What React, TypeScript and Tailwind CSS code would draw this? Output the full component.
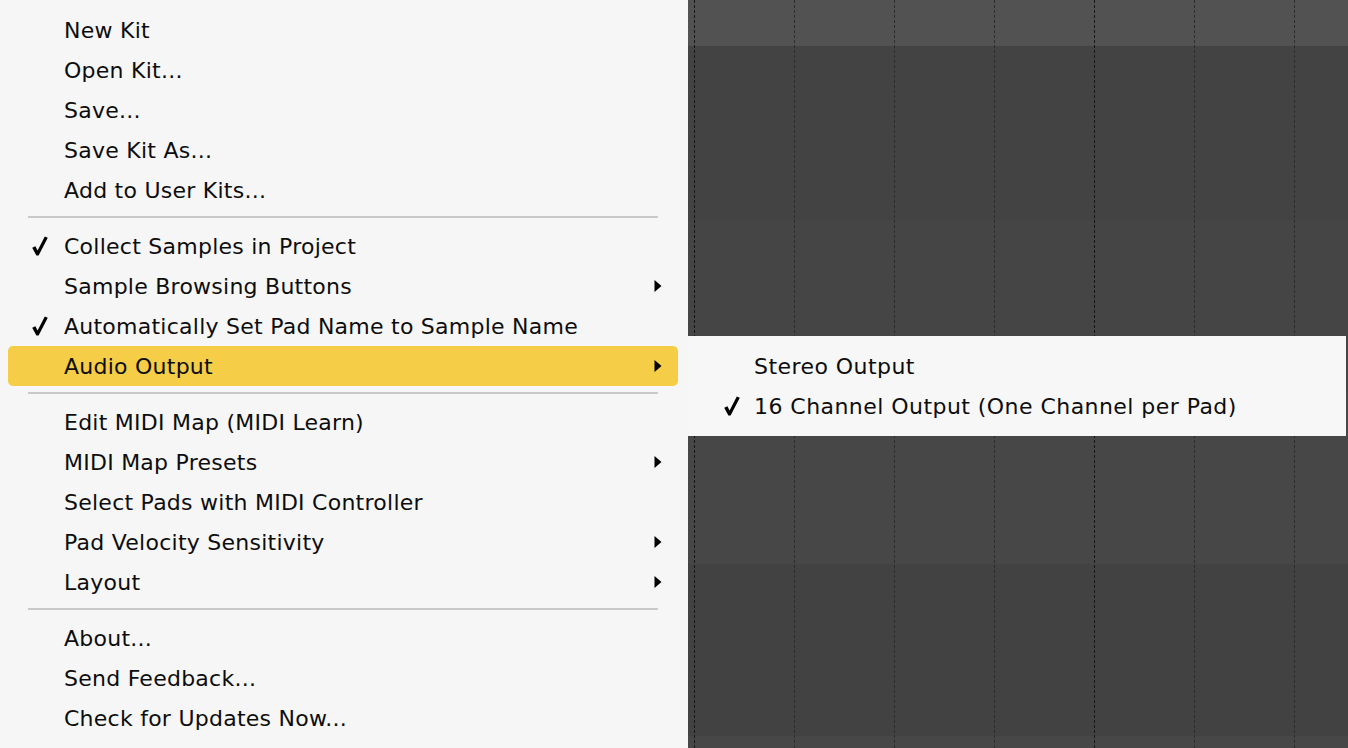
import React from 'react';

type Entry =
  | { kind: 'item'; label: string; checked?: boolean; submenu?: boolean; active?: boolean }
  | { kind: 'sep' };

const menu: Entry[] = [
  { kind: 'item', label: 'New Kit' },
  { kind: 'item', label: 'Open Kit...' },
  { kind: 'item', label: 'Save...' },
  { kind: 'item', label: 'Save Kit As...' },
  { kind: 'item', label: 'Add to User Kits...' },
  { kind: 'sep' },
  { kind: 'item', label: 'Collect Samples in Project', checked: true },
  { kind: 'item', label: 'Sample Browsing Buttons', submenu: true },
  { kind: 'item', label: 'Automatically Set Pad Name to Sample Name', checked: true },
  { kind: 'item', label: 'Audio Output', submenu: true, active: true },
  { kind: 'sep' },
  { kind: 'item', label: 'Edit MIDI Map (MIDI Learn)' },
  { kind: 'item', label: 'MIDI Map Presets', submenu: true },
  { kind: 'item', label: 'Select Pads with MIDI Controller' },
  { kind: 'item', label: 'Pad Velocity Sensitivity', submenu: true },
  { kind: 'item', label: 'Layout', submenu: true },
  { kind: 'sep' },
  { kind: 'item', label: 'About...' },
  { kind: 'item', label: 'Send Feedback...' },
  { kind: 'item', label: 'Check for Updates Now...' },
];

const font = "font-['DejaVu_Sans',_'Liberation_Sans',_sans-serif]";

function Check() {
  return (
    <svg width="16" height="20" viewBox="0 0 16 20" className="shrink-0">
      <path d="M0.2 11.8 L3.4 10.2 L5.6 14.6 L12.8 0.4 L15.8 1.8 L6.6 19.6 L4.4 19.6 Z" fill="#000" />
    </svg>
  );
}

function Arrow() {
  return (
    <svg width="8" height="12" viewBox="0 0 8 12" className="shrink-0">
      <path d="M0.5 0 L7.5 6 L0.5 12 Z" fill="#000" />
    </svg>
  );
}

function MenuRow({ label, checked, submenu, active }: { label: string; checked?: boolean; submenu?: boolean; active?: boolean }) {
  return (
    <div className={`ml-[8px] mr-[10px] h-[40px] flex items-center rounded-[5px] ${active ? 'bg-[#f5cd47]' : ''}`}>
      <div className="w-[56px] flex justify-end pr-[16px]">{checked && <Check />}</div>
      <span className="flex-1 text-[22px] text-[#0d0d0d] tracking-[0.25px]">{label}</span>
      <div className="w-[24px] flex items-center">{submenu && <Arrow />}</div>
    </div>
  );
}

function Separator() {
  return (
    <div className="h-[16px] pt-[6px] pl-[28px] pr-[30px]">
      <div className="h-[2px] bg-[#c9c9c9]" />
    </div>
  );
}

// lanes of the pad grid behind the menu
const bands = ['bg-[#454545]', 'bg-[#474747]', 'bg-[#424242]', 'bg-[#474747]'];
const cols = [0, 1, 2, 3, 4, 5, 6];

export default function App() {
  return (
    <div className={`relative w-[1348px] h-[748px] overflow-hidden flex ${font}`}>
      <div className="w-[688px] h-full bg-[#f6f6f6] pt-[10px]">
        {menu.map((e, i) =>
          e.kind === 'sep' ? (
            <Separator key={i} />
          ) : (
            <MenuRow key={i} label={e.label} checked={e.checked} submenu={e.submenu} active={e.active} />
          )
        )}
      </div>

      <div className="relative flex-1 h-full flex flex-col overflow-hidden">
        <div className="h-[46px] shrink-0 bg-[#525252]" />
        <div className="h-[174px] shrink-0 bg-[#434343]" />
        {bands.map((b, i) => (
          <div key={i} className={`h-[172px] shrink-0 ${b}`} />
        ))}
        <div className="absolute inset-0 flex pl-[6px]">
          {cols.map((c) => (
            <div
              key={c}
              className={`w-[100px] h-full shrink-0 border-l border-dashed ${c % 4 === 0 ? 'border-[#161616]' : 'border-[#2c2c2c]'}`}
            />
          ))}
        </div>
      </div>

      <div className="absolute left-[688px] top-[336px] w-[658px] h-[100px] bg-[#f7f7f7] pt-[10px]">
        <div className="h-[40px] flex items-center">
          <div className="w-[66px]" />
          <span className="text-[22px] text-[#0d0d0d] tracking-[0.45px]">Stereo Output</span>
        </div>
        <div className="h-[40px] flex items-center">
          <div className="w-[66px] flex justify-end pr-[14px]"><Check /></div>
          <span className="text-[22px] text-[#0d0d0d] tracking-[0.45px]">16 Channel Output (One Channel per Pad)</span>
        </div>
      </div>
    </div>
  );
}
